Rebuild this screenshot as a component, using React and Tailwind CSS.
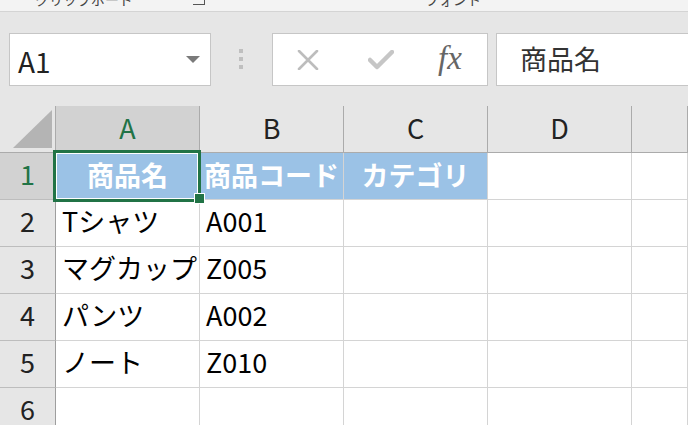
const font = { fontFamily: '"Noto Sans CJK JP", "Noto Sans", sans-serif' };

const cols = ["A", "B", "C", "D", ""];

const rows = [
  { n: 1, cells: ["商品名", "商品コード", "カテゴリ", "", ""], head: true },
  { n: 2, cells: ["Tシャツ", "A001", "", "", ""] },
  { n: 3, cells: ["マグカップ", "Z005", "", "", ""] },
  { n: 4, cells: ["パンツ", "A002", "", "", ""] },
  { n: 5, cells: ["ノート", "Z010", "", "", ""] },
  { n: 6, cells: ["", "", "", "", ""] },
];

const gridCols = "grid grid-cols-[56px_144px_144px_144px_144px_1fr]";

export default function App() {
  return (
    <div className="w-[688px] h-[425px] overflow-hidden bg-white text-black" style={font}>
      {/* ribbon (cut off) */}
      <div className="h-[12px] overflow-hidden bg-[#f3f3f3] border-b border-[#d4d4d4] text-[#444] text-[14px] leading-[18px]">
        <div className="flex items-start -mt-[10px]">
          <span className="ml-[35px]">クリップボード</span>
          <span className="ml-[60px] mt-[3px] w-[12px] h-[12px] border-r border-b border-[#555]" />
          <span className="ml-[220px]">フォント</span>
        </div>
      </div>

      {/* formula bar */}
      <div className="h-[94px] bg-[#e6e6e6] pt-[21px] flex items-start">
        <div className="ml-[9px] w-[202px] h-[53px] bg-white border border-[#c6c6c6] flex items-center justify-between pl-[8px] pr-[10px]">
          <span className="text-[28px] leading-none text-[#222] mt-[2px]">A1</span>
          <svg width="14" height="7" viewBox="0 0 14 7">
            <path d="M0 0 H14 L7 7 Z" fill="#7a7a7a" />
          </svg>
        </div>
        <div className="ml-[28px] mt-[16px] flex flex-col gap-[4px]">
          <span className="w-[4px] h-[4px] bg-[#bfbfbf]" />
          <span className="w-[4px] h-[4px] bg-[#bfbfbf]" />
          <span className="w-[4px] h-[4px] bg-[#bfbfbf]" />
        </div>
        <div className="ml-[29px] w-[216px] h-[53px] bg-white border border-[#c6c6c6] flex items-center pl-[24px]">
          <svg width="22" height="20" viewBox="0 0 22 20">
            <path d="M2 1 L20 19 M20 1 L2 19" stroke="#bdbdbd" strokeWidth="2.6" strokeLinecap="round" />
          </svg>
          <svg className="ml-[49px]" width="26" height="20" viewBox="0 0 26 20">
            <path d="M2 10 L9 17 L24 2" stroke="#c6c6c6" strokeWidth="4.5" fill="none" strokeLinecap="round" strokeLinejoin="round" />
          </svg>
          <span
            className="ml-[44px] text-[33px] leading-none italic text-[#666] -mt-[2px]"
            style={{ fontFamily: '"Liberation Serif", serif' }}
          >
            fx
          </span>
        </div>
        <div className="ml-[8px] flex-1 h-[53px] bg-white border border-[#c6c6c6] border-r-0 flex items-center pl-[23px]">
          <span className="text-[27px] leading-none text-[#333] -mt-[2px]">商品名</span>
        </div>
      </div>

      {/* column headers */}
      <div className={`${gridCols} h-[47px]`}>
        <div className="relative bg-[#e6e6e6] border-r border-b border-[#ababab]">
          <svg className="absolute left-0 top-0" width="55" height="46" viewBox="0 0 55 46">
            <path d="M13 42 L52 42 L52 4 Z" fill="#b4b4b4" />
          </svg>
        </div>
        {cols.map((c, i) => (
          <div
            key={i}
            className={`flex items-center justify-center pb-[3px] border-r border-b border-[#ababab] text-[27px] leading-none ${
              i === 0 ? "bg-[#d2d2d2] text-[#217346]" : "bg-[#e6e6e6] text-[#222]"
            }`}
          >
            {c}
          </div>
        ))}
      </div>

      {/* rows */}
      {rows.map((r) => (
        <div key={r.n} className={`${gridCols} h-[47px]`}>
          <div
            className={`flex items-center justify-center pb-[5px] border-r border-r-[#9e9e9e] border-b border-b-[#bdbdbd] text-[27px] leading-none ${
              r.n === 1 ? "bg-[#d2d2d2] text-[#217346]" : "bg-[#e6e6e6] text-[#222]"
            }`}
          >
            {r.n}
          </div>
          {r.cells.map((v, i) => (
            <div
              key={i}
              className={`relative border-r border-b border-[#d4d4d4] ${r.head && i < 3 ? "bg-[#9bc2e6]" : "bg-white"}`}
            >
              {r.head ? (
                <div className="h-full w-full overflow-hidden flex items-center justify-center pb-[4px] whitespace-nowrap text-white font-bold text-[27px] leading-none">
                  {v}
                </div>
              ) : (
                <div className="h-full w-full overflow-hidden flex items-center pl-[6px] pb-[5px] whitespace-nowrap text-[27px] leading-none">
                  {v}
                </div>
              )}
              {r.n === 1 && i === 0 && (
                <>
                  <div className="absolute z-10 -left-[3px] -top-[3px] w-[148px] h-[52px] border-[3px] border-[#217346] shadow-[inset_0_0_0_1px_white] pointer-events-none" />
                  <div className="absolute z-20 left-[139px] top-[41px] w-[9px] h-[9px] bg-[#217346] outline outline-1 outline-white" />
                </>
              )}
            </div>
          ))}
        </div>
      ))}
    </div>
  );
}
